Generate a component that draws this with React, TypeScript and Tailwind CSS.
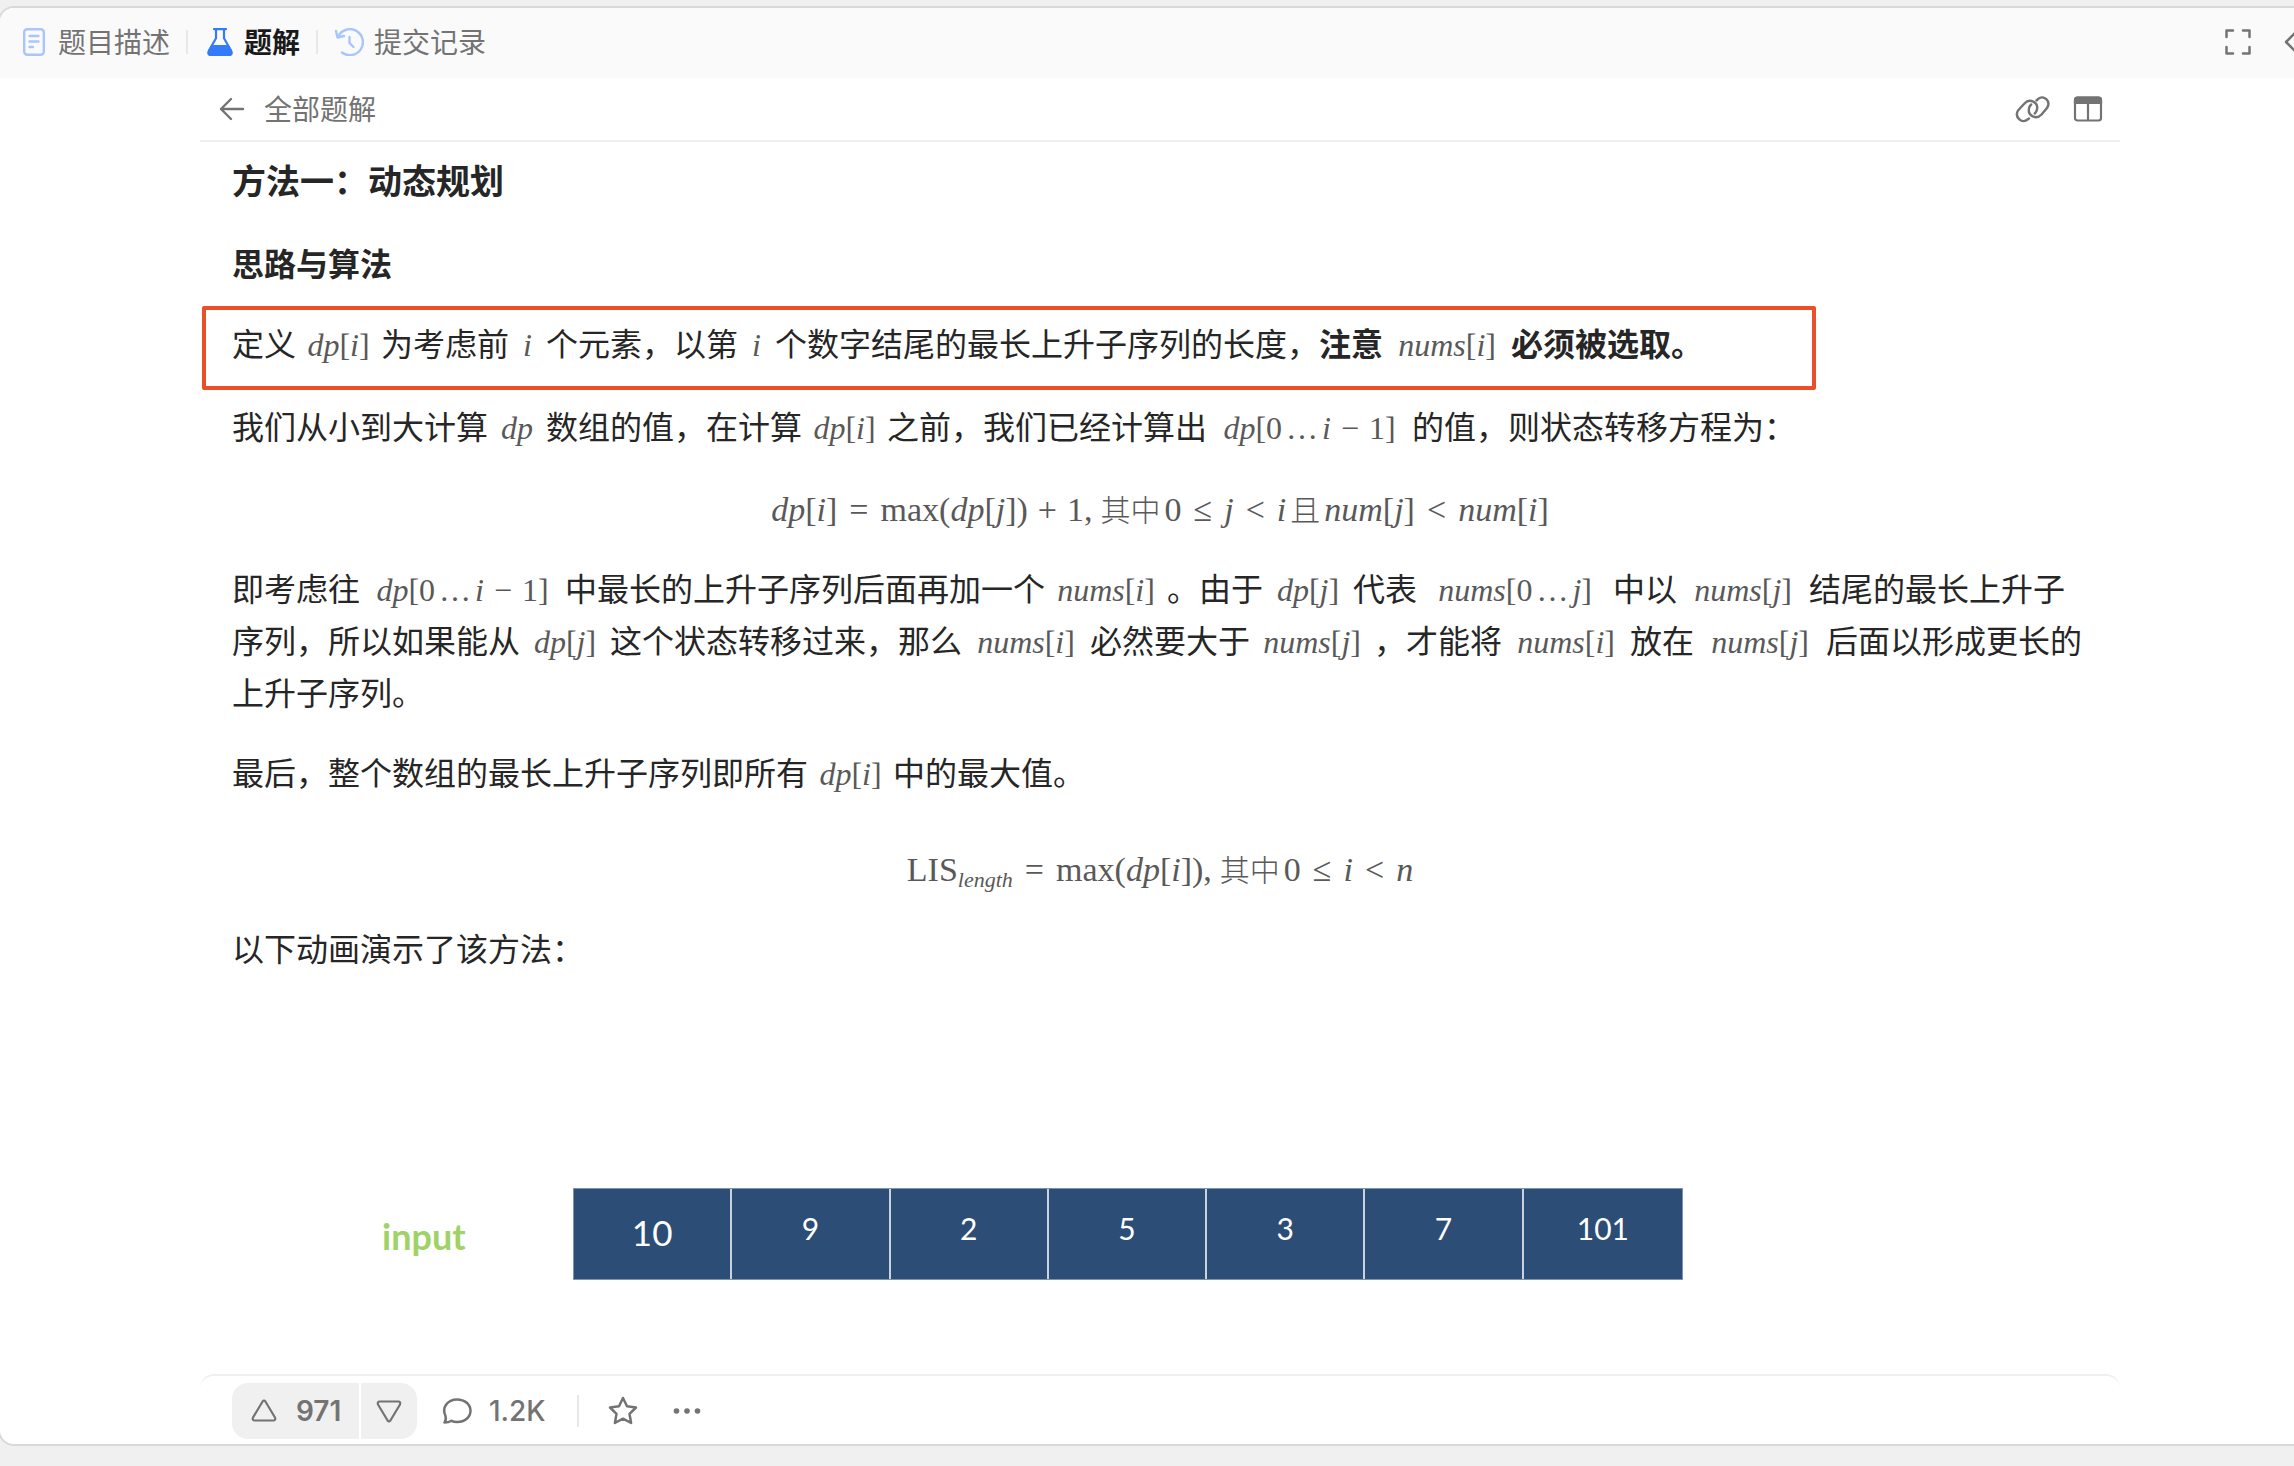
import type { ReactNode } from "react";

const INPUT = [10, 9, 2, 5, 3, 7, 101];

const UPRIGHT = ["max", "LIS"];

function mathToken(token: string, key: number) {
  if (token.startsWith("_")) {
    return (
      <sub key={key} className="text-[22px] italic">
        {token.slice(1)}
      </sub>
    );
  }
  if (/^[=<≤]$/.test(token)) return <span key={key} className="mx-3">{token}</span>;
  if (/^[+−]$/.test(token)) return <span key={key} className="mx-2.5">{token}</span>;
  if (token === "…") return <span key={key} className="mx-1">{token}</span>;
  if (token === ",") return <span key={key} className="mr-1">{token}</span>;
  if (/^[a-z]+$/i.test(token) && !UPRIGHT.includes(token)) return <i key={key}>{token}</i>;
  if (/^[一-龥]+$/.test(token)) return <span key={key} className="mx-1 text-[30px] font-light">{token}</span>;
  return <span key={key}>{token}</span>;
}

// Tiny formula printer: variables are italic, operators are spaced
function Tex({ src, className = "text-[32px]" }: { src: string; className?: string }) {
  const tokens = src.match(/_?[a-z]+|[0-9]+|[一-龥]+|\S/gi) ?? [];
  return (
    <span
      className={
        "inline-block whitespace-nowrap text-center font-['Liberation_Serif','Noto_Sans_CJK_SC',serif] font-normal leading-[40px] text-[#595959] " +
        className
      }
    >
      {tokens.map(mathToken)}
    </span>
  );
}

const DpI = () => <Tex src="dp[i]" className="w-[85px]" />;
const DpJ = () => <Tex src="dp[j]" className="w-[90px]" />;
const I = () => <Tex src="i" className="w-[37px]" />;
const NumsI = () => <Tex src="nums[i]" className="w-[128px]" />;
const NumsJ = () => <Tex src="nums[j]" className="w-[132px]" />;
const DpRange = () => <Tex src="dp[0…i−1]" className="w-[205px]" />;

function Divider({ className }: { className: string }) {
  return <span className={"w-0.5 bg-[#e8e8e8] " + className} />;
}

function Tab({ icon, label, active = false }: { icon: ReactNode; label: string; active?: boolean }) {
  return (
    <button
      type="button"
      className={"flex items-center gap-2.5 " + (active ? "font-semibold text-[#1a1a1a]" : "text-[#737373]")}
    >
      {icon}
      <span className="pb-0.5">{label}</span>
    </button>
  );
}

function DocIcon() {
  return (
    <svg width="28" height="28" viewBox="0 0 28 28" fill="none" stroke="#a9c6fc" strokeWidth="2.400" strokeLinecap="round">
      <rect x="4.200" y="1.200" width="19.600" height="25.600" rx="3" />
      <path d="M9.500 8h9M9.500 13.500h9M9.500 19h3.500" />
    </svg>
  );
}

function FlaskIcon() {
  return (
    <svg width="28" height="28" viewBox="0 0 28 28" fill="none" stroke="#347bf9" strokeWidth="2.200" strokeLinejoin="round" strokeLinecap="round">
      <path d="M8 1.200h12M10 1.200v9L3 22.500Q1.500 27 5 27h18q3.500 0 2-4.500L18 10.200V1.200" />
      <path d="M6 18h16l3 5q1.500 4-2 4H5q-3.500 0-2-4z" fill="#347bf9" />
    </svg>
  );
}

function HistoryIcon() {
  return (
    <svg width="30" height="28" viewBox="0 0 30 28" fill="none" stroke="#a9c6fc" strokeWidth="2.400" strokeLinecap="round" strokeLinejoin="round">
      <path d="M4.200 8.500A13 13 0 1 1 8 24.500" />
      <path d="M2 3l1.500 6.500 6.500-1.500" />
      <path d="M15.500 9v6l4 4" />
    </svg>
  );
}

function TopBar() {
  return (
    <header className="flex h-[70px] items-center justify-between bg-[#fafafa] pb-0.5 pl-5 text-[28px] leading-10">
      <nav className="flex items-center">
        <Tab icon={<DocIcon />} label="题目描述" />
        <Divider className="ml-4 mr-[18px] h-6" />
        <Tab icon={<FlaskIcon />} label="题解" active />
        <Divider className="ml-4 mr-4 h-6" />
        <Tab icon={<HistoryIcon />} label="提交记录" />
      </nav>
      <div className="flex items-center gap-8 pr-2 text-[#737373]">
        <button type="button" aria-label="全屏">
          <svg width="28" height="28" viewBox="0 0 28 28" fill="none" stroke="currentColor" strokeWidth="2.500" strokeLinecap="round" strokeLinejoin="round">
            <path d="M2.500 9V2.500H9M19 2.500h6.500V9M25.500 19v6.500H19M9 25.500H2.500V19" />
          </svg>
        </button>
        <button type="button" aria-label="收起">
          <svg width="28" height="28" viewBox="0 0 28 28" fill="none" stroke="currentColor" strokeWidth="2.500" strokeLinecap="round" strokeLinejoin="round">
            <path d="M12 4L2 14l10 10" />
          </svg>
        </button>
      </div>
    </header>
  );
}

function SubHeader() {
  return (
    <div className="flex h-16 items-center justify-between border-b-2 border-[#f0f0f0] pl-[18px] pr-[17px] text-[#737373]">
      <a href="#solutions" className="flex items-center gap-[18px] text-[28px] leading-10">
        <svg width="28" height="28" viewBox="0 0 28 28" fill="none" stroke="currentColor" strokeWidth="2.400" strokeLinecap="round" strokeLinejoin="round">
          <path d="M25 14H3M13 4L3 14l10 10" />
        </svg>
        <span className="pb-0.5">全部题解</span>
      </a>
      <div className="flex items-center gap-[22px]">
        <button type="button" aria-label="复制链接">
          <svg width="36" height="28" viewBox="0 0 36 28" fill="none" stroke="currentColor" strokeWidth="2.400" strokeLinecap="round" strokeLinejoin="round">
            <path d="M21.500 5.500l2-1.800c5-4.200 13 2.300 8.500 9.300l-5.500 6.500c-5 5.500-14 1.500-12.500-6 .2-1.600 1-2.900 2.200-4" />
            <path d="M14 23.500l-1.500 1C7.500 29 -1 22.500 3 15.500L9.500 8.500c5-5.500 14-1.500 12.500 6-.3 1.600-1 2.900-2.200 4" />
          </svg>
        </button>
        <button type="button" aria-label="分栏">
          <svg width="30" height="28" viewBox="0 0 30 28" fill="none" stroke="currentColor" strokeWidth="2.200">
            <rect x="2" y="2.500" width="26" height="23" rx="2.500" />
            <path d="M15 8v17" />
            <path d="M2 5q0-2.500 2.500-2.500h21Q28 2.500 28 5v3H2z" fill="currentColor" />
          </svg>
        </button>
      </div>
    </div>
  );
}

function InputFigure() {
  return (
    <figure className="mt-[215px] flex items-center pl-[150px] font-[Lato,'Open_Sans',sans-serif]">
      <figcaption className="w-[191px] pt-1 text-[36px] font-bold leading-[44px] text-[#9fd267]">input</figcaption>
      <ol className="grid h-[92px] w-[1110px] grid-cols-7 divide-x-2 divide-[#c9d3df] border border-[#7d93ae] bg-[#2c4d75] text-center text-white">
        {INPUT.map((n, i) => (
          <li key={n} className={i === 0 ? "text-[35px] leading-[86px]" : "text-[30px] leading-[78px]"}>
            {n}
          </li>
        ))}
      </ol>
    </figure>
  );
}

function Footer() {
  return (
    <footer className="flex h-[70px] items-center rounded-t-[14px] border-t-2 border-[#f0f0f0] px-8 pt-0.5 font-[Inter,sans-serif] text-[28px] font-medium leading-9 text-[#737373]">
      <div className="flex h-14 gap-0.5 overflow-hidden rounded-2xl">
        <button type="button" className="flex w-[127px] items-center gap-[18px] bg-[#f0f0f0] pl-[18px] font-semibold">
          <svg width="28" height="28" viewBox="0 0 28 28" fill="none" stroke="currentColor" strokeWidth="2.200" strokeLinejoin="round">
            <path d="M12.600 4.500q1.400-2 2.800 0l9.600 16q1 3-1.800 3H4.800q-2.800 0-1.800-3z" />
          </svg>
          971
        </button>
        <button type="button" aria-label="反对" className="flex w-14 items-center justify-center bg-[#f0f0f0]">
          <svg width="28" height="28" viewBox="0 0 28 28" fill="none" stroke="currentColor" strokeWidth="2.200" strokeLinejoin="round">
            <path d="M12.600 23.500q1.400 2 2.800 0l9.600-16q1-3-1.800-3H4.800q-2.800 0-1.800 3z" />
          </svg>
        </button>
      </div>
      <button type="button" className="ml-6 flex items-center gap-4">
        <svg width="32" height="32" viewBox="0 0 32 32" fill="none" stroke="currentColor" strokeWidth="2.500" strokeLinecap="round" strokeLinejoin="round">
          <path d="M3.500 27.500q2-2.500 1-6.500C.5 12.500 6.500 4.500 16 4.500c8 0 13.500 5 13.500 11.300S24 27 16 27c-2 0-4-.4-5.500-1.200-2 1.200-4.500 1.700-7 1.700z" />
        </svg>
        1.2K
      </button>
      <Divider className="ml-[31px] mr-7 h-8" />
      <button type="button" aria-label="收藏">
        <svg width="32" height="32" viewBox="0 0 32 32" fill="none" stroke="currentColor" strokeWidth="2.500" strokeLinejoin="round">
          <path d="M16 3l4 8.300 9 1.200-6.500 6.300 1.600 9.200-8.100-4.300L7.900 28l1.600-9.200L3 12.500l9-1.200z" />
        </svg>
      </button>
      <button type="button" aria-label="更多" className="ml-8">
        <svg width="32" height="32" viewBox="0 0 32 32" fill="currentColor">
          <circle cx="5.500" cy="16" r="2.800" />
          <circle cx="16" cy="16" r="2.800" />
          <circle cx="26.500" cy="16" r="2.800" />
        </svg>
      </button>
    </footer>
  );
}

function Article() {
  return (
    <article className="flex-1 px-8 pt-3 text-[32px] leading-[52px] text-[#262626]">
      <h2 className="text-[34px] font-semibold">方法一：动态规划</h2>
      <h3 className="mt-[30px] font-semibold">思路与算法</h3>
      <p className="relative mt-[28px]">
        定义
        <DpI />
        为考虑前
        <I />
        个元素，以第
        <I />
        个数字结尾的最长上升子序列的长度，
        <strong className="font-semibold">
          注意
          <NumsI />
          必须被选取。
        </strong>
        <span className="absolute -left-[30px] -top-[10px] h-[84px] w-[1614px] rounded-xs border-4 border-[#ea5028]" />
      </p>
      <p className="mt-[31px]">
        我们从小到大计算
        <Tex src="dp" className="w-[58px]" />
        数组的值，在计算
        <DpI />
        之前，我们已经计算出
        <DpRange />
        的值，则状态转移方程为：
      </p>
      <div className="mt-[30px] text-center">
        <Tex src="dp[i] = max(dp[j]) + 1, 其中 0 ≤ j < i 且 num[j] < num[i]" className="text-[34px]" />
      </div>
      <p className="mt-[28px]">
        即考虑往
        <DpRange />
        中最长的上升子序列后面再加一个
        <Tex src="nums[i]" className="w-[122px]" />
        。由于
        <DpJ />
        代表
        <Tex src="nums[0…j]" className="w-[196px]" />
        中以
        <NumsJ />
        结尾的最长上升子序列，所以如果能从
        <DpJ />
        这个状态转移过来，那么
        <NumsI />
        必然要大于
        <Tex src="nums[j]" className="w-[124px]" />
        ，才能将
        <NumsI />
        放在
        <NumsJ />
        后面以形成更长的上升子序列。
      </p>
      <p className="mt-[28px]">
        最后，整个数组的最长上升子序列即所有
        <DpI />
        中的最大值。
      </p>
      <div className="mt-[44px] text-center">
        <Tex src="LIS_length = max(dp[i]), 其中 0 ≤ i < n" className="text-[34px]" />
      </div>
      <p className="mt-[28px]">以下动画演示了该方法：</p>
      <InputFigure />
    </article>
  );
}

export default function App() {
  return (
    <div className="flex min-h-screen flex-col overflow-hidden bg-[#f0f0f0] pb-5 pt-1.5 font-['Noto_Sans_CJK_SC',sans-serif]">
      {/* the panel runs on past the right edge of the window */}
      <div className="-ml-0.5 flex w-[calc(100%+30px)] flex-1 flex-col overflow-hidden rounded-2xl border-2 border-[#d9d9d9] bg-white">
        <TopBar />
        <main className="mx-auto flex w-full max-w-[1920px] flex-1 flex-col">
          <SubHeader />
          <Article />
          <Footer />
        </main>
      </div>
    </div>
  );
}
